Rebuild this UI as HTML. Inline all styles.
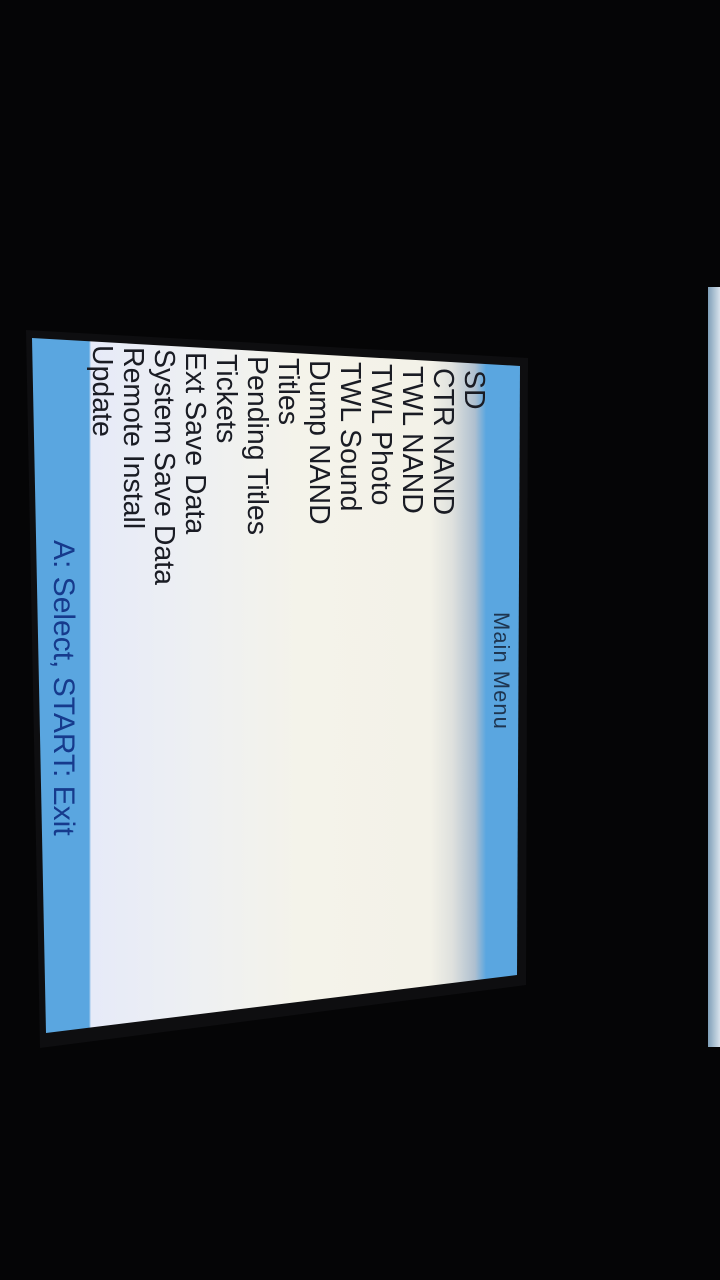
<!DOCTYPE html>
<html><head><meta charset="utf-8"><style>
html,body{margin:0;padding:0;width:720px;height:1280px;background:#050506;overflow:hidden;font-family:"Liberation Sans",sans-serif}
.side{position:absolute;left:708px;top:287px;width:12px;height:760px;background:linear-gradient(90deg,#7f9fb8,#d7e2ec);}
.bez{position:absolute;left:0;top:0;width:720px;height:1280px;
 clip-path:polygon(26px 330px,528px 358px,526px 985px,40px 1048px);background:#0e0e10}
.scr{position:absolute;left:0;top:0;width:720px;height:1280px;
 clip-path:polygon(32px 338px,520px 366px,517px 975px,46px 1033px);
 background:linear-gradient(90deg,#5aa6e0 0,#5aa6e0 89px,#e6eaf8 91px,#eef0f2 200px,#f4f3ea 300px,#f3f2e8 430px,#dfe1de 452px,#aebfcf 475px,#5aa6e0 486px,#5aa6e0 720px);}
.l{position:absolute;writing-mode:vertical-rl;line-height:30px;width:30px;font-size:28.5px;color:#1a1c24;white-space:nowrap}
.h{position:absolute;writing-mode:vertical-rl;left:489px;top:612px;font-size:22px;letter-spacing:1px;color:#1e3550;line-height:24px}
.f{position:absolute;writing-mode:vertical-rl;left:47px;top:540px;font-size:30px;color:#163a8c;line-height:32px;white-space:nowrap}
</style></head><body>
<div class="side"></div>
<div class="bez"></div>
<div class="scr"></div>
<div class="h">Main Menu</div>
<span class="l" style="left:459px;top:370px">SD</span>
<span class="l" style="left:428px;top:368px">CTR NAND</span>
<span class="l" style="left:397px;top:366px">TWL NAND</span>
<span class="l" style="left:366px;top:364px">TWL Photo</span>
<span class="l" style="left:335px;top:362px">TWL Sound</span>
<span class="l" style="left:304px;top:360px">Dump NAND</span>
<span class="l" style="left:273px;top:358px">Titles</span>
<span class="l" style="left:242px;top:356px">Pending Titles</span>
<span class="l" style="left:211px;top:354px">Tickets</span>
<span class="l" style="left:180px;top:352px">Ext Save Data</span>
<span class="l" style="left:149px;top:349px">System Save Data</span>
<span class="l" style="left:118px;top:347px">Remote Install</span>
<span class="l" style="left:87px;top:345px">Update</span>
<div class="f">A: Select, START: Exit</div>
</body></html>
